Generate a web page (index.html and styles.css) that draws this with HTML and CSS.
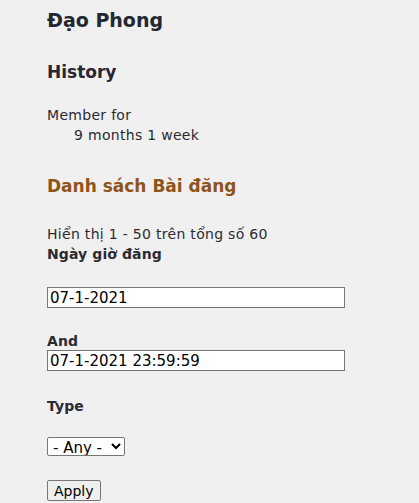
FILE: index.html
```html
<!DOCTYPE html>
<html lang="vi">
<head>
<meta charset="utf-8">
<title>Đạo Phong</title>
<link rel="stylesheet" href="styles.css">
</head>
<body>
<main class="page">
  <h1 class="title">Đạo Phong</h1>
  <h2 class="section">History</h2>
  <dl class="history">
    <dt>Member for</dt>
    <dd>9 months 1 week</dd>
  </dl>
  <h2 class="section list-title">Danh sách Bài đăng</h2>
  <p class="summary">Hiển thị 1 - 50 trên tổng số 60</p>
  <form class="filters">
    <label class="label">Ngày giờ đăng</label>
    <input class="text first" type="text" value="07-1-2021">
    <label class="label and">And</label>
    <input class="text second" type="text" value="07-1-2021 23:59:59">
    <label class="label type">Type</label>
    <select class="select"><option>- Any -</option></select>
    <button class="apply" type="button">Apply</button>
  </form>
</main>
</body>
</html>
```
FILE: styles.css
```css
html, body {
  margin: 0;
  padding: 0;
  background: #f0f0f0;
}
body {
  font-family: "DejaVu Sans", Verdana, sans-serif;
  font-size: 14px;
  letter-spacing: 0.3px;
  color: #2b2b33;
}
.page {
  padding: 8px 0 0 47px;
}
.title {
  font-size: 19px;
  font-weight: bold;
  letter-spacing: 0;
  margin: 0;
  line-height: 24px;
  color: #222831;
}
.section {
  font-size: 17px;
  font-weight: bold;
  letter-spacing: 0;
  margin: 30px 0 0;
  line-height: 20px;
  color: #2a2633;
}
.history {
  margin: 23px 0 0;
  line-height: 20px;
}
.history dt { margin: 0; }
.history dd { margin: 0 0 0 27px; }
.list-title {
  color: #8f5419;
  margin-top: 31px;
}
.summary {
  margin: 28px 0 0;
  line-height: 20px;
}
.filters {
  display: flex;
  flex-direction: column;
  align-items: flex-start;
}
.label {
  font-weight: bold;
  letter-spacing: 0.1px;
  line-height: 20px;
}
.text {
  box-sizing: border-box;
  width: 298px;
  height: 21px;
  margin: 0;
  padding: 0 2px;
  border: 1px solid #767676;
  background: #fff;
  font-family: "DejaVu Sans", Verdana, sans-serif;
  font-size: 15px;
  letter-spacing: 0;
  color: #000;
}
.text.first { margin-top: 23px; }
.text.second { margin-top: -1px; }
.label.and { margin-top: 23px; }
.label.type { margin-top: 25px; }
.select {
  box-sizing: border-box;
  margin-top: 21px;
  width: 78px;
  height: 19px;
  padding: 0 0 0 1px;
  font-family: "DejaVu Sans", Verdana, sans-serif;
  font-size: 15px;
  letter-spacing: 0;
  border: 1px solid #767676;
  border-radius: 2px;
  background: #fff;
  color: #000;
}
.apply {
  box-sizing: border-box;
  margin-top: 24px;
  height: 21px;
  padding: 0 6px;
  font-family: "DejaVu Sans", Verdana, sans-serif;
  font-size: 14px;
  letter-spacing: 0;
  border: 1px solid #767676;
  border-radius: 2px;
  background: #efefef;
  color: #000;
}
```
